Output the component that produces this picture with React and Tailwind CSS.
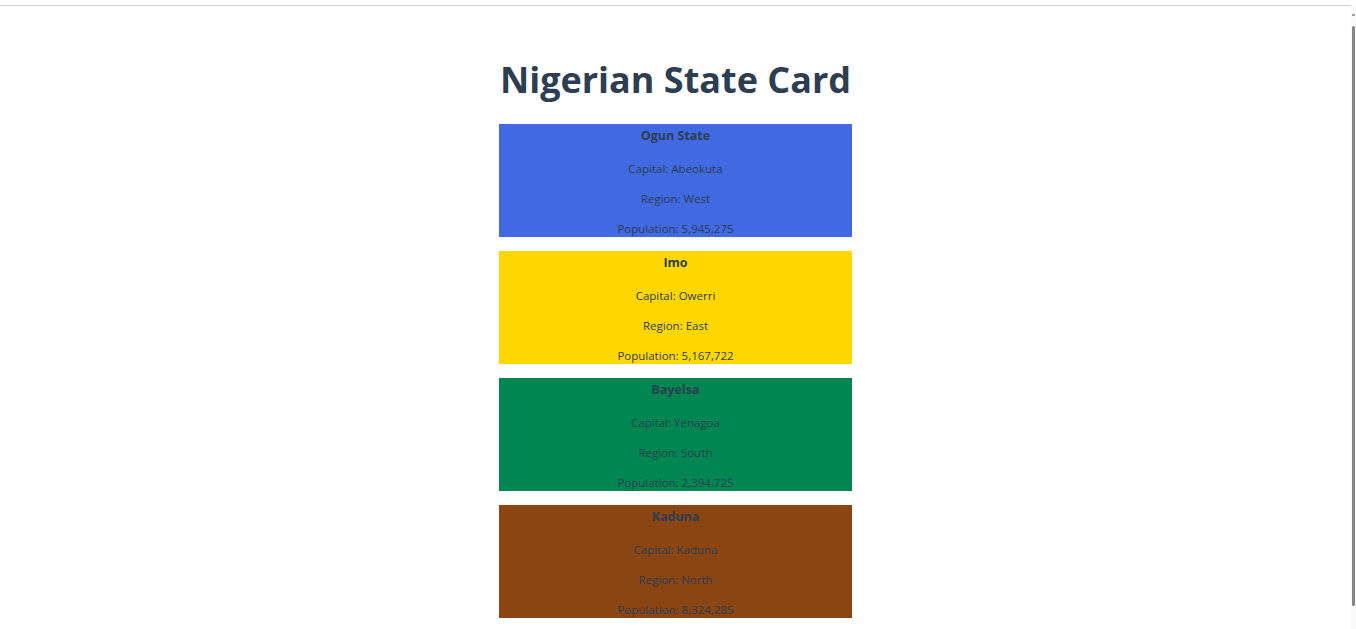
const states = [
  { name: "Ogun State", capital: "Abeokuta", region: "West", population: "5,945,275", bg: "bg-[#4169e1]" },
  { name: "Imo", capital: "Owerri", region: "East", population: "5,167,722", bg: "bg-[#ffd700]" },
  { name: "Bayelsa", capital: "Yenagoa", region: "South", population: "2,394,725", bg: "bg-[#008751]" },
  { name: "Kaduna", capital: "Kaduna", region: "North", population: "8,324,285", bg: "bg-[#8b4513]" },
];

function StateCard({ state }) {
  return (
    <div className={`${state.bg} flex h-[113px] w-[353px] flex-col items-center overflow-hidden pt-[3px] text-[#2c3e50]`}>
      <h3 className="text-[12.5px] font-bold leading-[18px]">{state.name}</h3>
      <p className="mt-[15px] text-[11.5px] leading-[17px]">Capital: {state.capital}</p>
      <p className="mt-[13px] text-[11.5px] leading-[17px]">Region: {state.region}</p>
      <p className="mt-[13px] text-[11.5px] leading-[17px]">Population: {state.population}</p>
    </div>
  );
}

export default function App() {
  return (
    <div className="relative h-[629px] overflow-hidden bg-white pr-[5px] font-['Open_Sans',sans-serif]">
      <div className="mt-[5px] h-px bg-[#d0d0d0]" />
      <div className="flex flex-col items-center pt-[50px]">
        <h1 className="text-[36px] font-bold leading-[48px] text-[#2c3e50]">Nigerian State Card</h1>
        <div className="mt-[20px] flex flex-col gap-[14px]">
          {states.map((s) => (
            <StateCard key={s.name} state={s} />
          ))}
        </div>
      </div>
      {/* scrollbar */}
      <div className="absolute right-0 top-[6px] flex h-[623px] w-[5px] flex-col items-center bg-[#fafafa]">
        <div className="mt-[8px] h-[2px] w-[3px] bg-[#a0a0a0]" />
        <div className="mt-[10px] h-[580px] w-[3px] rounded-sm bg-[#858585]" />
      </div>
    </div>
  );
}
